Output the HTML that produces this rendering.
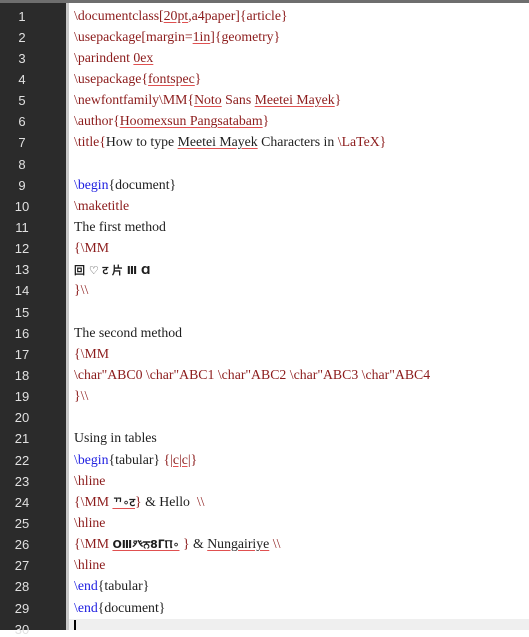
<!DOCTYPE html>
<html><head><meta charset="utf-8"><style>
html,body{margin:0;padding:0;width:529px;height:630px;overflow:hidden;background:#fff;}
#top{position:absolute;left:0;top:0;width:529px;height:3px;background:#6e6e6e;}
#gut{position:absolute;left:0;top:3px;width:66px;height:627px;background:#2b2b2b;}
#sep{position:absolute;left:66px;top:3px;width:3px;height:627px;background:#c8c8c8;}
#hl{position:absolute;left:69px;top:619px;width:460px;height:11px;background:#efefef;}
#cur{position:absolute;left:74px;top:620px;width:2px;height:10px;background:#000;}
.ln{position:absolute;left:0;width:44px;text-align:center;color:#e0e0e0;font:13px "Liberation Sans",sans-serif;}
.tx{position:absolute;left:74px;white-space:pre;color:#1e1e1e;font:13.8px "Liberation Serif","DejaVu Serif",serif;}
.r{color:#8c1c1c}.b{color:#1c1ce0}
.u{text-decoration:underline;text-decoration-color:#e05050;text-underline-offset:2px}
.m{font-family:"DejaVu Sans",sans-serif;font-size:11px;font-weight:bold}
</style></head><body>
<div id="top"></div><div id="gut"></div><div id="sep"></div><div id="hl"></div><div id="cur"></div>
<div class="ln" style="top:9px">1</div><div class="ln" style="top:30px">2</div><div class="ln" style="top:51px">3</div><div class="ln" style="top:72px">4</div><div class="ln" style="top:93px">5</div><div class="ln" style="top:114px">6</div><div class="ln" style="top:135px">7</div><div class="ln" style="top:157px">8</div><div class="ln" style="top:178px">9</div><div class="ln" style="top:199px">10</div><div class="ln" style="top:220px">11</div><div class="ln" style="top:241px">12</div><div class="ln" style="top:262px">13</div><div class="ln" style="top:283px">14</div><div class="ln" style="top:305px">15</div><div class="ln" style="top:326px">16</div><div class="ln" style="top:347px">17</div><div class="ln" style="top:368px">18</div><div class="ln" style="top:389px">19</div><div class="ln" style="top:410px">20</div><div class="ln" style="top:431px">21</div><div class="ln" style="top:453px">22</div><div class="ln" style="top:474px">23</div><div class="ln" style="top:495px">24</div><div class="ln" style="top:516px">25</div><div class="ln" style="top:537px">26</div><div class="ln" style="top:558px">27</div><div class="ln" style="top:579px">28</div><div class="ln" style="top:601px">29</div><div class="ln" style="top:622px">30</div>

<div class="tx r" style="top:8px">\documentclass[<span class="u">20pt</span>,a4paper]{article}</div>
<div class="tx r" style="top:29px">\usepackage[margin=<span class="u">1in</span>]{geometry}</div>
<div class="tx r" style="top:50px">\parindent <span class="u">0ex</span></div>
<div class="tx r" style="top:71px">\usepackage{<span class="u">fontspec</span>}</div>
<div class="tx r" style="top:92px">\newfontfamily\MM{<span class="u">Noto</span> Sans <span class="u">Meetei Mayek</span>}</div>
<div class="tx r" style="top:113px">\author{<span class="u">Hoomexsun Pangsatabam</span>}</div>
<div class="tx" style="top:134px"><span class="r">\title{</span>How to type <span class="u">Meetei Mayek</span> Characters in <span class="r">\LaTeX}</span></div>
<div class="tx" style="top:177px"><span class="b">\begin</span>{document}</div>
<div class="tx r" style="top:198px">\maketitle</div>
<div class="tx" style="top:219px">The first method</div>
<div class="tx r" style="top:240px">{\MM</div>
<div class="tx m" style="top:262px">回 ♡ ट 片 Ⅲ Ɑ</div>
<div class="tx r" style="top:282px">}\\</div>
<div class="tx" style="top:325px">The second method</div>
<div class="tx r" style="top:346px">{\MM</div>
<div class="tx r" style="top:367px">\char"ABC0 \char"ABC1 \char"ABC2 \char"ABC3 \char"ABC4</div>
<div class="tx r" style="top:388px">}\\</div>
<div class="tx" style="top:430px">Using in tables</div>
<div class="tx" style="top:452px"><span class="b">\begin</span>{tabular} <span class="r">{<span class="u">|c|c|</span>}</span></div>
<div class="tx r" style="top:473px">\hline</div>
<div class="tx" style="top:494px"><span class="r">{\MM </span><span class="u m">ᄁ∘ट</span><span class="r">}</span> &amp; Hello  <span class="r">\\</span></div>
<div class="tx r" style="top:515px">\hline</div>
<div class="tx" style="top:536px"><span class="r">{\MM </span><span class="u m">ꓳⅢ癶ਨ8ᒥⲠ∘</span> <span class="r">}</span> &amp; <span class="u">Nungairiye</span> <span class="r">\\</span></div>
<div class="tx r" style="top:557px">\hline</div>
<div class="tx" style="top:578px"><span class="b">\end</span>{tabular}</div>
<div class="tx" style="top:600px"><span class="b">\end</span>{document}</div>
</body></html>
